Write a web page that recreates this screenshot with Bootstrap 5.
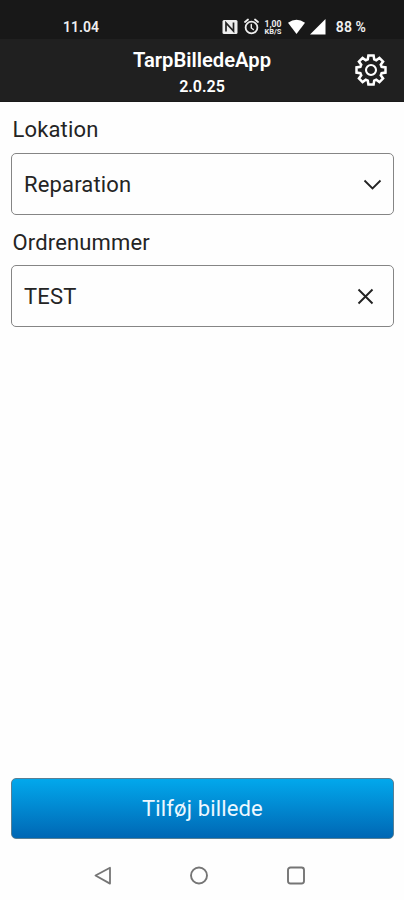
<!DOCTYPE html>
<html lang="da">
<head>
<meta charset="utf-8">
<meta name="viewport" content="width=device-width, initial-scale=1">
<title>TarpBilledeApp</title>
<link href="https://cdn.jsdelivr.net/npm/bootstrap@5.3.0/dist/css/bootstrap.min.css" rel="stylesheet">
<style>
body{font-family:Roboto,"Liberation Sans",sans-serif;background:#fefefe;color:#242424;height:900px}
svg{display:block;flex:none}
.status{height:39px;background:#181818;color:#f0f0f0;padding:16px 38px 0 63px;font-size:14px;line-height:22px;font-weight:600}
.battery{margin-left:9px;letter-spacing:.1px}
.topbar{height:63px;background:#202020;color:#fff;display:grid;grid-template-columns:55px 1fr 55px;border-bottom:1px solid #1a1a1a}
.topbar h1{font-size:20.200px;line-height:24px;font-weight:600;padding-top:9px}
.version{font-size:16px;line-height:20px;font-weight:600;padding-top:5px}
.field-label{font-size:22px;line-height:28px;margin:0 0 9px 1.500px;letter-spacing:.15px}
.field-label.second{margin-top:14px;margin-bottom:8px}
.field-box{height:62px;border:1px solid #858585;border-radius:5px;background:#fefefe;font-size:22px;color:#242424;padding:1px 11px 0 12px;letter-spacing:.15px}
.add-btn,.add-btn:hover{height:61px;border:1px solid #587f94;border-radius:5px;background:linear-gradient(#02a8ec,#0067b4);color:#edf8ff;font-size:22px;letter-spacing:.15px}
.sysnav{height:61px;padding:12px 98px 0 94px}
</style>
<script src="https://cdn.jsdelivr.net/npm/bootstrap@5.3.0/dist/js/bootstrap.bundle.min.js"></script>
</head>
<body class="d-flex flex-column overflow-hidden">
<div class="status d-flex justify-content-between">
  <span>11.04</span>
  <div class="d-flex">
    <svg width="105" height="22" viewBox="222 16 105 22">
      <rect x="222.500" y="20" width="15" height="14" rx="1.500" fill="#eee"/>
      <path d="M226 31.500V23l7.500 8V22.500" fill="none" stroke="#222" stroke-width="1.700"/>
      <g fill="none" stroke="#eee" stroke-width="1.800" stroke-linecap="round">
        <circle cx="251.500" cy="27.500" r="5.900"/>
        <path d="M245 22l3-2.500M258 22l-3-2.500"/><path d="M251.300 24.500v3.500l2 1.500" stroke-width="1.400"/>
      </g>
      <g fill="#eee" font-family="Roboto,sans-serif" font-weight="700" text-anchor="middle">
        <text x="273" y="26.500" font-size="9" textLength="17" lengthAdjust="spacingAndGlyphs">1,00</text>
        <text x="273" y="34" font-size="7" textLength="17" lengthAdjust="spacingAndGlyphs">KB/S</text>
      </g>
      <path d="M288 22.800Q296.500 16.500 305 22.800L296.500 34Z" fill="#fff"/>
      <path d="M325.500 19v15.500H310Z" fill="#fff"/>
    </svg>
    <span class="battery">88 %</span>
  </div>
</div>
<header class="topbar text-center">
  <span></span>
  <div><h1 class="m-0">TarpBilledeApp</h1><div class="version">2.0.25</div></div>
  <a href="#" aria-label="Indstillinger" class="d-flex align-items-center ps-1">
    <svg width="36" height="34" viewBox="-18 -17 36 34" fill="none" stroke="#fff" stroke-width="2.500" stroke-linejoin="miter"><path d="M-3.200-10.600L-2.600-14.500H2.600L3.200-10.600L5.230-9.760L8.410-12.090L12.090-8.410L9.760-5.230L10.600-3.200L14.500-2.600V2.600L10.600 3.200L9.760 5.230L12.090 8.410L8.410 12.090L5.230 9.760L3.200 10.600L2.600 14.500H-2.600L-3.200 10.600L-5.230 9.760L-8.410 12.090L-12.090 8.410L-9.760 5.230L-10.600 3.200L-14.500 2.600V-2.600L-10.600-3.200L-9.760-5.230L-12.090-8.410L-8.410-12.090L-5.230-9.760Z"/><circle r="5" stroke-width="2.100"/></svg>
  </a>
</header>
<main class="flex-grow-1 d-flex flex-column" style="padding:14px 10px 0 11px">
  <div class="field-label">Lokation</div>
  <div class="field-box d-flex align-items-center justify-content-between">
    <span>Reparation</span>
    <svg width="19" height="12" viewBox="0 0 19 12" fill="none" stroke="#222" stroke-width="1.800"><path d="M1.500 1.500l8 8 8-8"/></svg>
  </div>
  <div class="field-label second">Ordrenummer</div>
  <div class="field-box d-flex align-items-center justify-content-between">
    <span>TEST</span>
    <svg class="me-2" width="17" height="17" viewBox="0 0 17 17" fill="none" stroke="#222" stroke-width="1.900"><path d="M1.500 1.500l14 14M15.500 1.500l-14 14"/></svg>
  </div>
  <button type="button" class="add-btn btn w-100 mt-auto p-0">Tilføj billede</button>
</main>
<nav class="sysnav d-flex justify-content-between align-items-center">
  <svg width="18" height="20" viewBox="0 0 18 20" fill="none" stroke="#757575" stroke-width="1.800" stroke-linejoin="round"><path d="M1.500 9.500L16 1.800v15.800Z"/></svg>
  <svg width="20" height="20" viewBox="0 0 20 20" fill="none" stroke="#757575" stroke-width="1.900"><circle cx="10" cy="9.500" r="8"/></svg>
  <svg width="20" height="20" viewBox="0 0 20 20" fill="none" stroke="#757575" stroke-width="1.900"><rect x="2" y="1.500" width="16" height="16" rx="2.500"/></svg>
</nav>
</body>
</html>
